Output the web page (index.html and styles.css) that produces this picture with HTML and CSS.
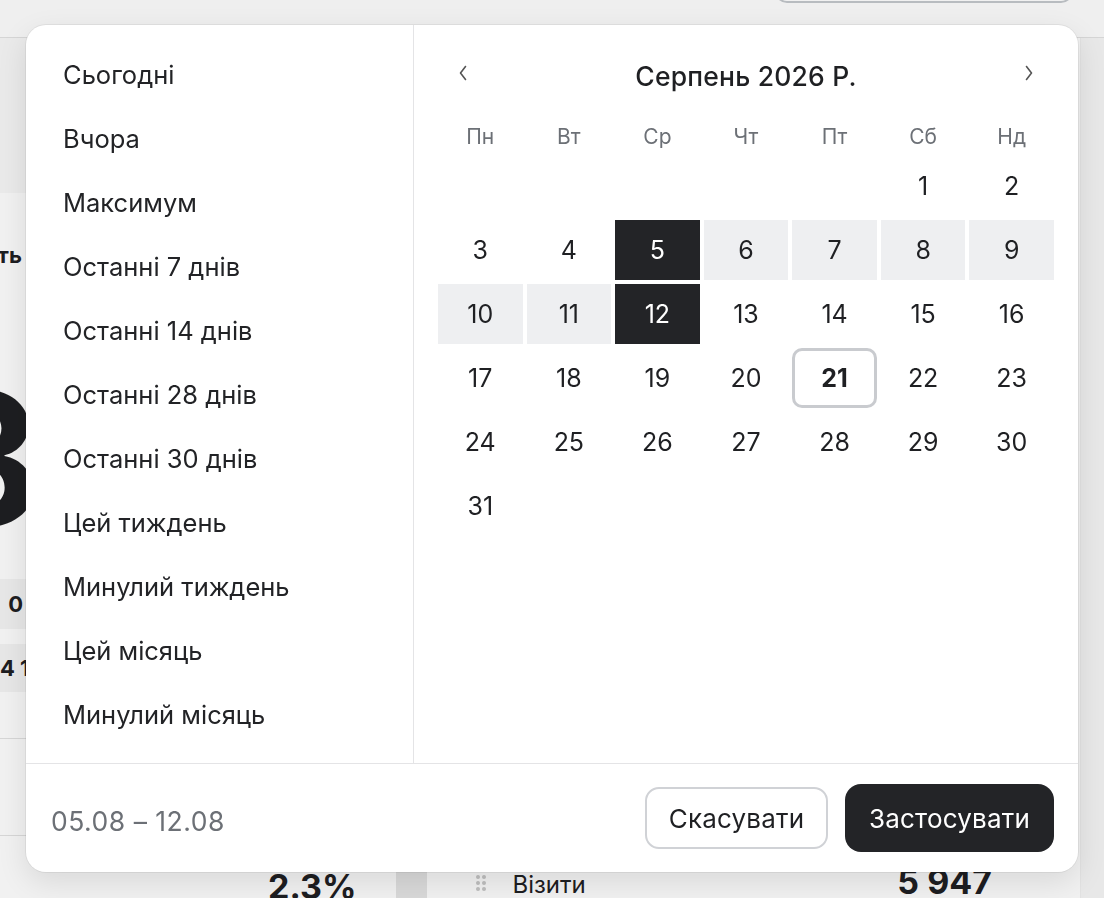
FILE: index.html
```html
<!DOCTYPE html>
<html lang="uk">
<head>
<meta charset="utf-8">
<title>Вибір періоду</title>
<link rel="stylesheet" href="styles.css">
</head>
<body>
<div class="app">
  <header class="topbar">
    <div class="range-btn"></div>
  </header>
  <div class="main">
    <aside class="left-col">
      <div class="filters"></div>
      <div class="kpi-title">Активність</div>
      <div class="kpi-value">8</div>
      <div class="kpi-row first">0</div>
      <div class="kpi-row">4 1</div>
      <div class="kpi-line"></div>
      <div class="kpi-line second"></div>
    </aside>
    <section class="center">
      <div class="bottom-row">
        <span class="pct">2.3%</span>
        <span class="swatch"></span>
        <span class="grip">
          <i></i><i></i><i></i><i></i><i></i><i></i>
        </span>
        <span class="metric">Візити</span>
        <span class="metric-val">5 947</span>
      </div>
    </section>
    <aside class="right-col"></aside>
  </div>
</div>
<div class="overlay"></div>

<div class="picker">
  <div class="picker-body">
    <ul class="presets">
      <li>Сьогодні</li>
      <li>Вчора</li>
      <li>Максимум</li>
      <li>Останні 7 днів</li>
      <li>Останні 14 днів</li>
      <li>Останні 28 днів</li>
      <li>Останні 30 днів</li>
      <li>Цей тиждень</li>
      <li>Минулий тиждень</li>
      <li>Цей місяць</li>
      <li>Минулий місяць</li>
    </ul>
    <div class="calendar">
      <div class="cal-head">
        <button class="nav" aria-label="Попередній місяць">
          <svg width="12" height="18" viewBox="0 0 12 18"><path d="M8.5 2.5 L3.5 9 L8.5 15.5" fill="none" stroke="#555" stroke-width="1.6" stroke-linecap="round" stroke-linejoin="round"/></svg>
        </button>
        <div class="cal-title">Серпень 2026 Р.</div>
        <button class="nav" aria-label="Наступний місяць">
          <svg width="12" height="18" viewBox="0 0 12 18"><path d="M3.5 2.5 L8.5 9 L3.5 15.5" fill="none" stroke="#555" stroke-width="1.6" stroke-linecap="round" stroke-linejoin="round"/></svg>
        </button>
      </div>
      <div class="weekdays">
        <span>Пн</span><span>Вт</span><span>Ср</span><span>Чт</span><span>Пт</span><span>Сб</span><span>Нд</span>
      </div>
      <div class="days">
        <span class="day empty"></span><span class="day empty"></span><span class="day empty"></span><span class="day empty"></span><span class="day empty"></span>
        <span class="day">1</span><span class="day">2</span>
        <span class="day">3</span><span class="day">4</span><span class="day sel">5</span><span class="day range">6</span><span class="day range">7</span><span class="day range">8</span><span class="day range">9</span>
        <span class="day range">10</span><span class="day range">11</span><span class="day sel">12</span><span class="day">13</span><span class="day">14</span><span class="day">15</span><span class="day">16</span>
        <span class="day">17</span><span class="day">18</span><span class="day">19</span><span class="day">20</span><span class="day today">21</span><span class="day">22</span><span class="day">23</span>
        <span class="day">24</span><span class="day">25</span><span class="day">26</span><span class="day">27</span><span class="day">28</span><span class="day">29</span><span class="day">30</span>
        <span class="day">31</span>
      </div>
    </div>
  </div>
  <div class="picker-foot">
    <span class="range-text">05.08 – 12.08</span>
    <div class="actions">
      <button class="btn btn-cancel">Скасувати</button>
      <button class="btn btn-apply">Застосувати</button>
    </div>
  </div>
</div>
</body>
</html>
```
FILE: styles.css
```css
* { box-sizing: border-box; }

html, body {
  margin: 0;
  padding: 0;
  width: 1104px;
  height: 898px;
  overflow: hidden;
  background: #ffffff;
  font-family: Inter, "Noto Sans", "DejaVu Sans", sans-serif;
  color: #1f2023;
}

/* ---------- background dashboard ---------- */
.app {
  display: flex;
  flex-direction: column;
  height: 898px;
}

.topbar {
  height: 38px;
  flex: none;
  background: #fdfdfd;
  border-bottom: 1px solid #e2e2e2;
  display: flex;
  justify-content: flex-end;
  padding-right: 31px;
}

.range-btn {
  width: 298px;
  height: 34px;
  margin-top: -31px;
  border: 2px solid #c3c7cc;
  border-radius: 12px;
  background: #fff;
}

.main {
  flex: 1;
  display: flex;
  min-height: 0;
}

.left-col {
  width: 60px;
  flex: none;
  overflow: hidden;
  display: flex;
  flex-direction: column;
  align-items: flex-end;
}

.filters {
  width: 100%;
  height: 155px;
  flex: none;
  background: #f8f8f8;
}

.kpi-title {
  margin-top: 49px;
  padding-right: 38px;
  font-size: 22px;
  font-weight: 700;
  white-space: nowrap;
  line-height: 26px;
}

.kpi-value {
  margin-top: 116px;
  margin-right: 22px;
  font-size: 186px;
  font-weight: 700;
  line-height: 150px;
  height: 150px;
  letter-spacing: -4px;
}

.kpi-row {
  width: 100%;
  height: 48px;
  margin-top: 15px;
  background: #f5f5f5;
  text-align: right;
  padding-right: 37px;
  font-size: 22px;
  font-weight: 700;
  line-height: 48px;
  white-space: nowrap;
}

.kpi-row.first { margin-top: 45px; height: 50px; line-height: 50px; }

.kpi-line {
  width: 100%;
  height: 1px;
  background: #e3e3e3;
  margin-top: 46px;
  flex: none;
}
.kpi-line.second { margin-top: 96px; }

.center {
  flex: 1;
  display: flex;
  flex-direction: column;
  justify-content: flex-end;
}

.bottom-row {
  height: 28px;
  display: flex;
  align-items: flex-start;
  overflow: hidden;
}

.pct {
  margin-left: 208px;
  font-size: 34px;
  font-weight: 700;
  line-height: 44px;
  margin-top: -5px;
}

.swatch {
  width: 31px;
  height: 26px;
  margin-top: 2px;
  margin-left: 40px;
  background: #e6e6e6;
}

.grip {
  margin-left: 49px;
  margin-top: 5px;
  width: 10px;
  display: grid;
  grid-template-columns: 4px 4px;
  gap: 2px;
}
.grip i {
  width: 4px;
  height: 4px;
  border-radius: 50%;
  background: #c9c9c9;
}

.metric {
  margin-left: 26px;
  font-size: 24px;
  line-height: 30px;
}

.metric-val {
  margin-left: auto;
  margin-right: 88px;
  font-size: 34px;
  font-weight: 700;
  line-height: 40px;
  margin-top: -8px;
}

.right-col {
  width: 24px;
  flex: none;
  background: #f6f6f6;
  border-left: 1px solid #f0f0f0;
}

.overlay {
  position: fixed;
  inset: 0;
  background: rgba(0, 0, 0, 0.055);
}

/* ---------- date picker popup ---------- */
.picker {
  position: absolute;
  left: 26px;
  top: 25px;
  width: 1052px;
  height: 847px;
  background: #ffffff;
  border-radius: 20px;
  box-shadow: 0 0 0 1px rgba(0, 0, 0, 0.06), 0 10px 30px rgba(0, 0, 0, 0.10);
  display: flex;
  flex-direction: column;
  overflow: hidden;
}

.picker-body {
  height: 738px;
  display: flex;
  flex: none;
}

.presets {
  list-style: none;
  margin: 0;
  padding: 18px 0 16px 37px;
  width: 388px;
  border-right: 1px solid #e4e4e6;
}

.presets li {
  height: 64px;
  line-height: 64px;
  font-size: 25.5px;
  color: #222326;
  white-space: nowrap;
}

.calendar {
  flex: 1;
  padding: 24px 24px 0 24px;
}

.cal-head {
  height: 48px;
  display: flex;
  align-items: center;
}

.nav {
  width: 50px;
  height: 48px;
  border: 0;
  background: transparent;
  padding: 0;
  display: flex;
  align-items: center;
  justify-content: center;
}

.cal-title {
  flex: 1;
  text-align: center;
  font-size: 26.5px;
  font-weight: 500;
  letter-spacing: 0.2px;
  color: #1f2023;
  padding-top: 5px;
}

.weekdays {
  margin-top: 19px;
  height: 40px;
  display: grid;
  grid-template-columns: repeat(7, 1fr);
  column-gap: 4px;
  align-items: center;
  text-align: center;
  font-size: 21px;
  color: #6c7076;
}

.days {
  display: grid;
  grid-template-columns: repeat(7, 1fr);
  grid-auto-rows: 60px;
  column-gap: 4px;
  row-gap: 4px;
}

.day {
  display: flex;
  align-items: center;
  justify-content: center;
  font-size: 25px;
  color: #1f2023;
}

.day.range { background: #eeeff1; }
.day.sel { background: #232427; color: #ffffff; }
.day.today {
  border: 3px solid #c9cbcf;
  border-radius: 10px;
  font-weight: 700;
}

.picker-foot {
  flex: 1;
  border-top: 1px solid #e4e4e6;
  display: flex;
  align-items: center;
  justify-content: space-between;
  padding: 0 24px 0 25px;
}

.range-text {
  font-size: 26.5px;
  letter-spacing: 0.5px;
  color: #6c7076;
  margin-top: 6px;
}

.actions {
  display: flex;
  align-items: center;
  gap: 17px;
}

.btn {
  font-family: inherit;
  font-size: 26px;
  letter-spacing: 0.2px;
  border-radius: 14px;
  cursor: pointer;
  padding: 0;
}

.btn-cancel {
  width: 183px;
  height: 62px;
  border: 2px solid #d0d2d6;
  background: #ffffff;
  color: #1f2023;
}

.btn-apply {
  width: 209px;
  height: 68px;
  border: 0;
  border-radius: 16px;
  background: #232427;
  color: #ffffff;
}
```
